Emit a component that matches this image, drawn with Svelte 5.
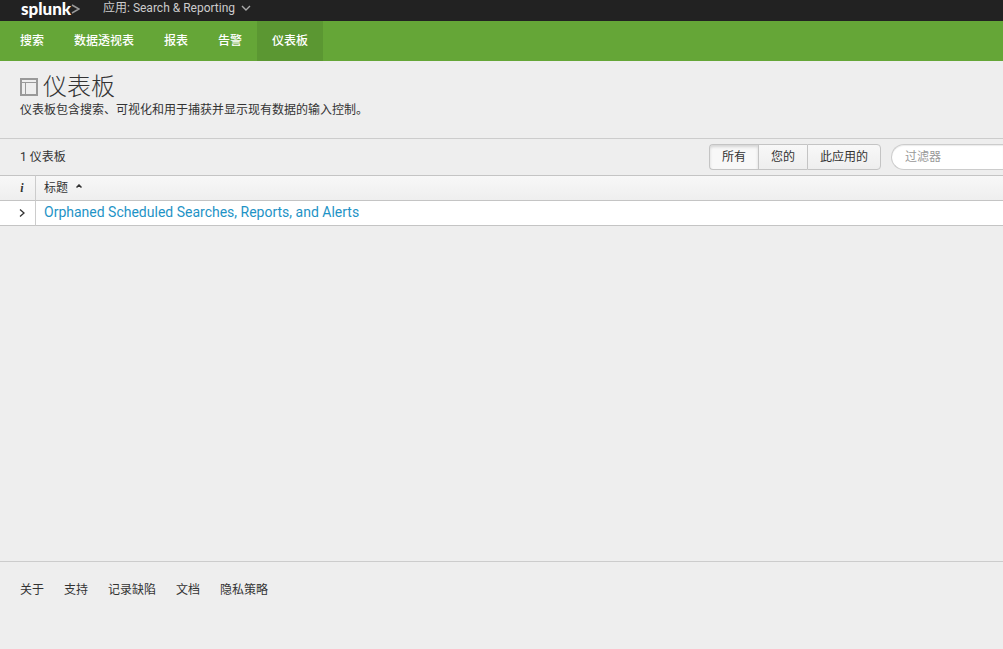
<script lang="ts">
  const navItems = ['搜索', '数据透视表', '报表', '告警', '仪表板'];
  const scopes = ['所有', '您的', '此应用的'];
  const footerLinks = ['关于', '支持', '记录缺陷', '文档', '隐私策略'];
  const dashboards = ['Orphaned Scheduled Searches, Reports, and Alerts'];

  let active = $state('仪表板');
  let scope = $state('所有');
  let filter = $state('');
</script>

<div class="page">
  <header>
    <div class="topbar">
      <a class="brand" href="#home">splunk<svg viewBox="0 0 9 12" aria-hidden="true"><path d="M1 2l7 4-7 4" /></svg></a>
      <button class="app-menu">
        应用: Search &amp; Reporting
        <svg viewBox="0 0 10 6" aria-hidden="true"><path d="M1 1l4 4 4-4" /></svg>
      </button>
    </div>
    <nav>
      {#each navItems as item}
        <a href="#{item}" class:active={item === active} onclick={() => (active = item)}>{item}</a>
      {/each}
    </nav>
  </header>

  <main>
    <section class="heading">
      <h1>
        <svg viewBox="0 0 18 18" aria-hidden="true">
          <rect class="frame" x="1" y="1" width="16" height="16" />
          <path class="thin" d="M2 4.5h14M5.5 5v11" />
        </svg>
        仪表板
      </h1>
      <p>仪表板包含搜索、可视化和用于捕获并显示现有数据的输入控制。</p>
    </section>

    <section class="toolbar">
      <span class="count">{dashboards.length} 仪表板</span>
      <div class="btn-group">
        {#each scopes as s}
          <button class:active={s === scope} onclick={() => (scope = s)}>{s}</button>
        {/each}
      </div>
      <input class="filter" type="text" placeholder="过滤器" aria-label="过滤器" bind:value={filter} />
    </section>

    <table>
      <thead>
        <tr>
          <th class="info"><i>i</i></th>
          <th>
            标题
            <svg class="sort" viewBox="0 0 6 4" aria-hidden="true"><path d="M0.5 3.5L3 1l2.5 2.5" /></svg>
          </th>
        </tr>
      </thead>
      <tbody>
        {#each dashboards.filter((d) => d.toLowerCase().includes(filter.toLowerCase())) as title}
          <tr>
            <td class="info">
              <svg class="expand" viewBox="0 0 6 8" aria-hidden="true"><path d="M1 0.5L5 4 1 7.5" /></svg>
            </td>
            <td><a href="#dashboard">{title}</a></td>
          </tr>
        {/each}
      </tbody>
    </table>
  </main>

  <footer>
    {#each footerLinks as link}
      <a href="#{link}">{link}</a>
    {/each}
  </footer>
</div>

<style>
  :global(body) {
    background: #eee;
  }
  .page {
    display: flex;
    flex-direction: column;
    min-height: 100vh;
    font-family: Roboto, 'Noto Sans CJK SC', sans-serif;
    font-size: 12px;
    line-height: 16px;
    color: #333;
  }
  a {
    color: inherit;
    text-decoration: none;
  }
  button,
  input {
    font: inherit;
    color: inherit;
  }
  svg {
    fill: none;
    stroke: currentColor;
  }
  .topbar {
    display: flex;
    align-items: flex-start;
    height: 21px;
    padding-left: 21px;
    background: #222;
    color: #ccc;
  }
  .brand {
    display: flex;
    align-items: center;
    width: 82px;
    font-family: Lato, 'Open Sans', sans-serif;
    font-size: 17px;
    font-weight: 900;
    line-height: 17px;
    color: #fff;
  }
  .brand svg {
    width: 9px;
    height: 12px;
    color: #999;
    stroke-width: 1.5;
  }
  .app-menu {
    display: flex;
    align-items: center;
    gap: 6px;
    padding: 0;
    border: 0;
    background: none;
  }
  .app-menu svg {
    width: 10px;
    height: 6px;
    color: #aaa;
    stroke-width: 1.4;
  }
  nav {
    display: flex;
    padding-left: 5px;
    background: #65a637;
    color: #fff;
    font-weight: 500;
  }
  nav a {
    padding: 12px 15px;
  }
  nav .active {
    background: #5b9732;
  }
  main {
    flex: 1;
  }
  .heading {
    height: 65px;
    padding: 12px 20px 0;
    border-bottom: 1px solid #ccc;
  }
  h1 {
    display: flex;
    align-items: center;
    gap: 5px;
    margin: 0;
    font-size: 24px;
    font-weight: 300;
    line-height: 28px;
  }
  h1 svg {
    width: 18px;
    height: 18px;
    color: #999;
  }
  .frame {
    stroke-width: 2;
  }
  .thin {
    stroke-width: 1;
  }
  .heading p {
    margin: 1px 0 0;
  }
  .toolbar {
    display: flex;
    align-items: center;
    height: 36px;
    padding-left: 20px;
  }
  .count {
    flex: 1;
  }
  .btn-group {
    display: flex;
    margin-right: 10px;
  }
  .btn-group button {
    height: 26px;
    padding: 0 12px;
    border: 1px solid #c4c4c4;
    border-right-width: 0;
    background: linear-gradient(#f8f8f8, #eee);
  }
  .btn-group button:first-child {
    border-radius: 4px 0 0 4px;
  }
  .btn-group button:last-child {
    border-right-width: 1px;
    border-radius: 0 4px 4px 0;
  }
  .btn-group .active {
    background: #f8f8f8;
    box-shadow: inset 0 2px 3px rgba(0, 0, 0, 0.14);
  }
  .filter {
    box-sizing: border-box;
    width: 112px;
    height: 26px;
    padding: 0 13px;
    border: 1px solid #ccc;
    border-right: 0;
    border-radius: 13px 0 0 13px;
    background: #fff;
    box-shadow: inset 0 1px 1px rgba(0, 0, 0, 0.08);
  }
  .filter::placeholder {
    color: #999;
  }
  table {
    width: 100%;
    border-collapse: separate;
    border-spacing: 0;
  }
  th,
  td {
    height: 24px;
    padding: 0 8px;
    text-align: left;
    font-weight: 400;
    border-bottom: 1px solid #c4c4c4;
  }
  th {
    border-top: 1px solid #c4c4c4;
  }
  thead {
    background: linear-gradient(#f8f8f8, #eee);
  }
  tbody {
    background: #fff;
  }
  td {
    padding-bottom: 2px;
    height: 22px;
    font-size: 14px;
  }
  td a {
    color: #1e93c6;
  }
  .info {
    box-sizing: border-box;
    width: 36px;
    padding-left: 9px;
    padding-right: 0;
    text-align: center;
    border-right: 1px solid #ccc;
  }
  td.info {
    height: 25px;
  }
  .info i {
    font-family: 'Liberation Serif', serif;
    font-weight: 700;
  }
  .sort {
    width: 6px;
    height: 4px;
    margin-left: 5px;
    vertical-align: 4px;
    stroke-width: 1.5;
  }
  .expand {
    width: 6px;
    height: 8px;
    stroke-width: 1.3;
  }
  footer {
    display: flex;
    gap: 20px;
    height: 67px;
    padding: 20px 20px 0;
    border-top: 1px solid #ccc;
  }
</style>
